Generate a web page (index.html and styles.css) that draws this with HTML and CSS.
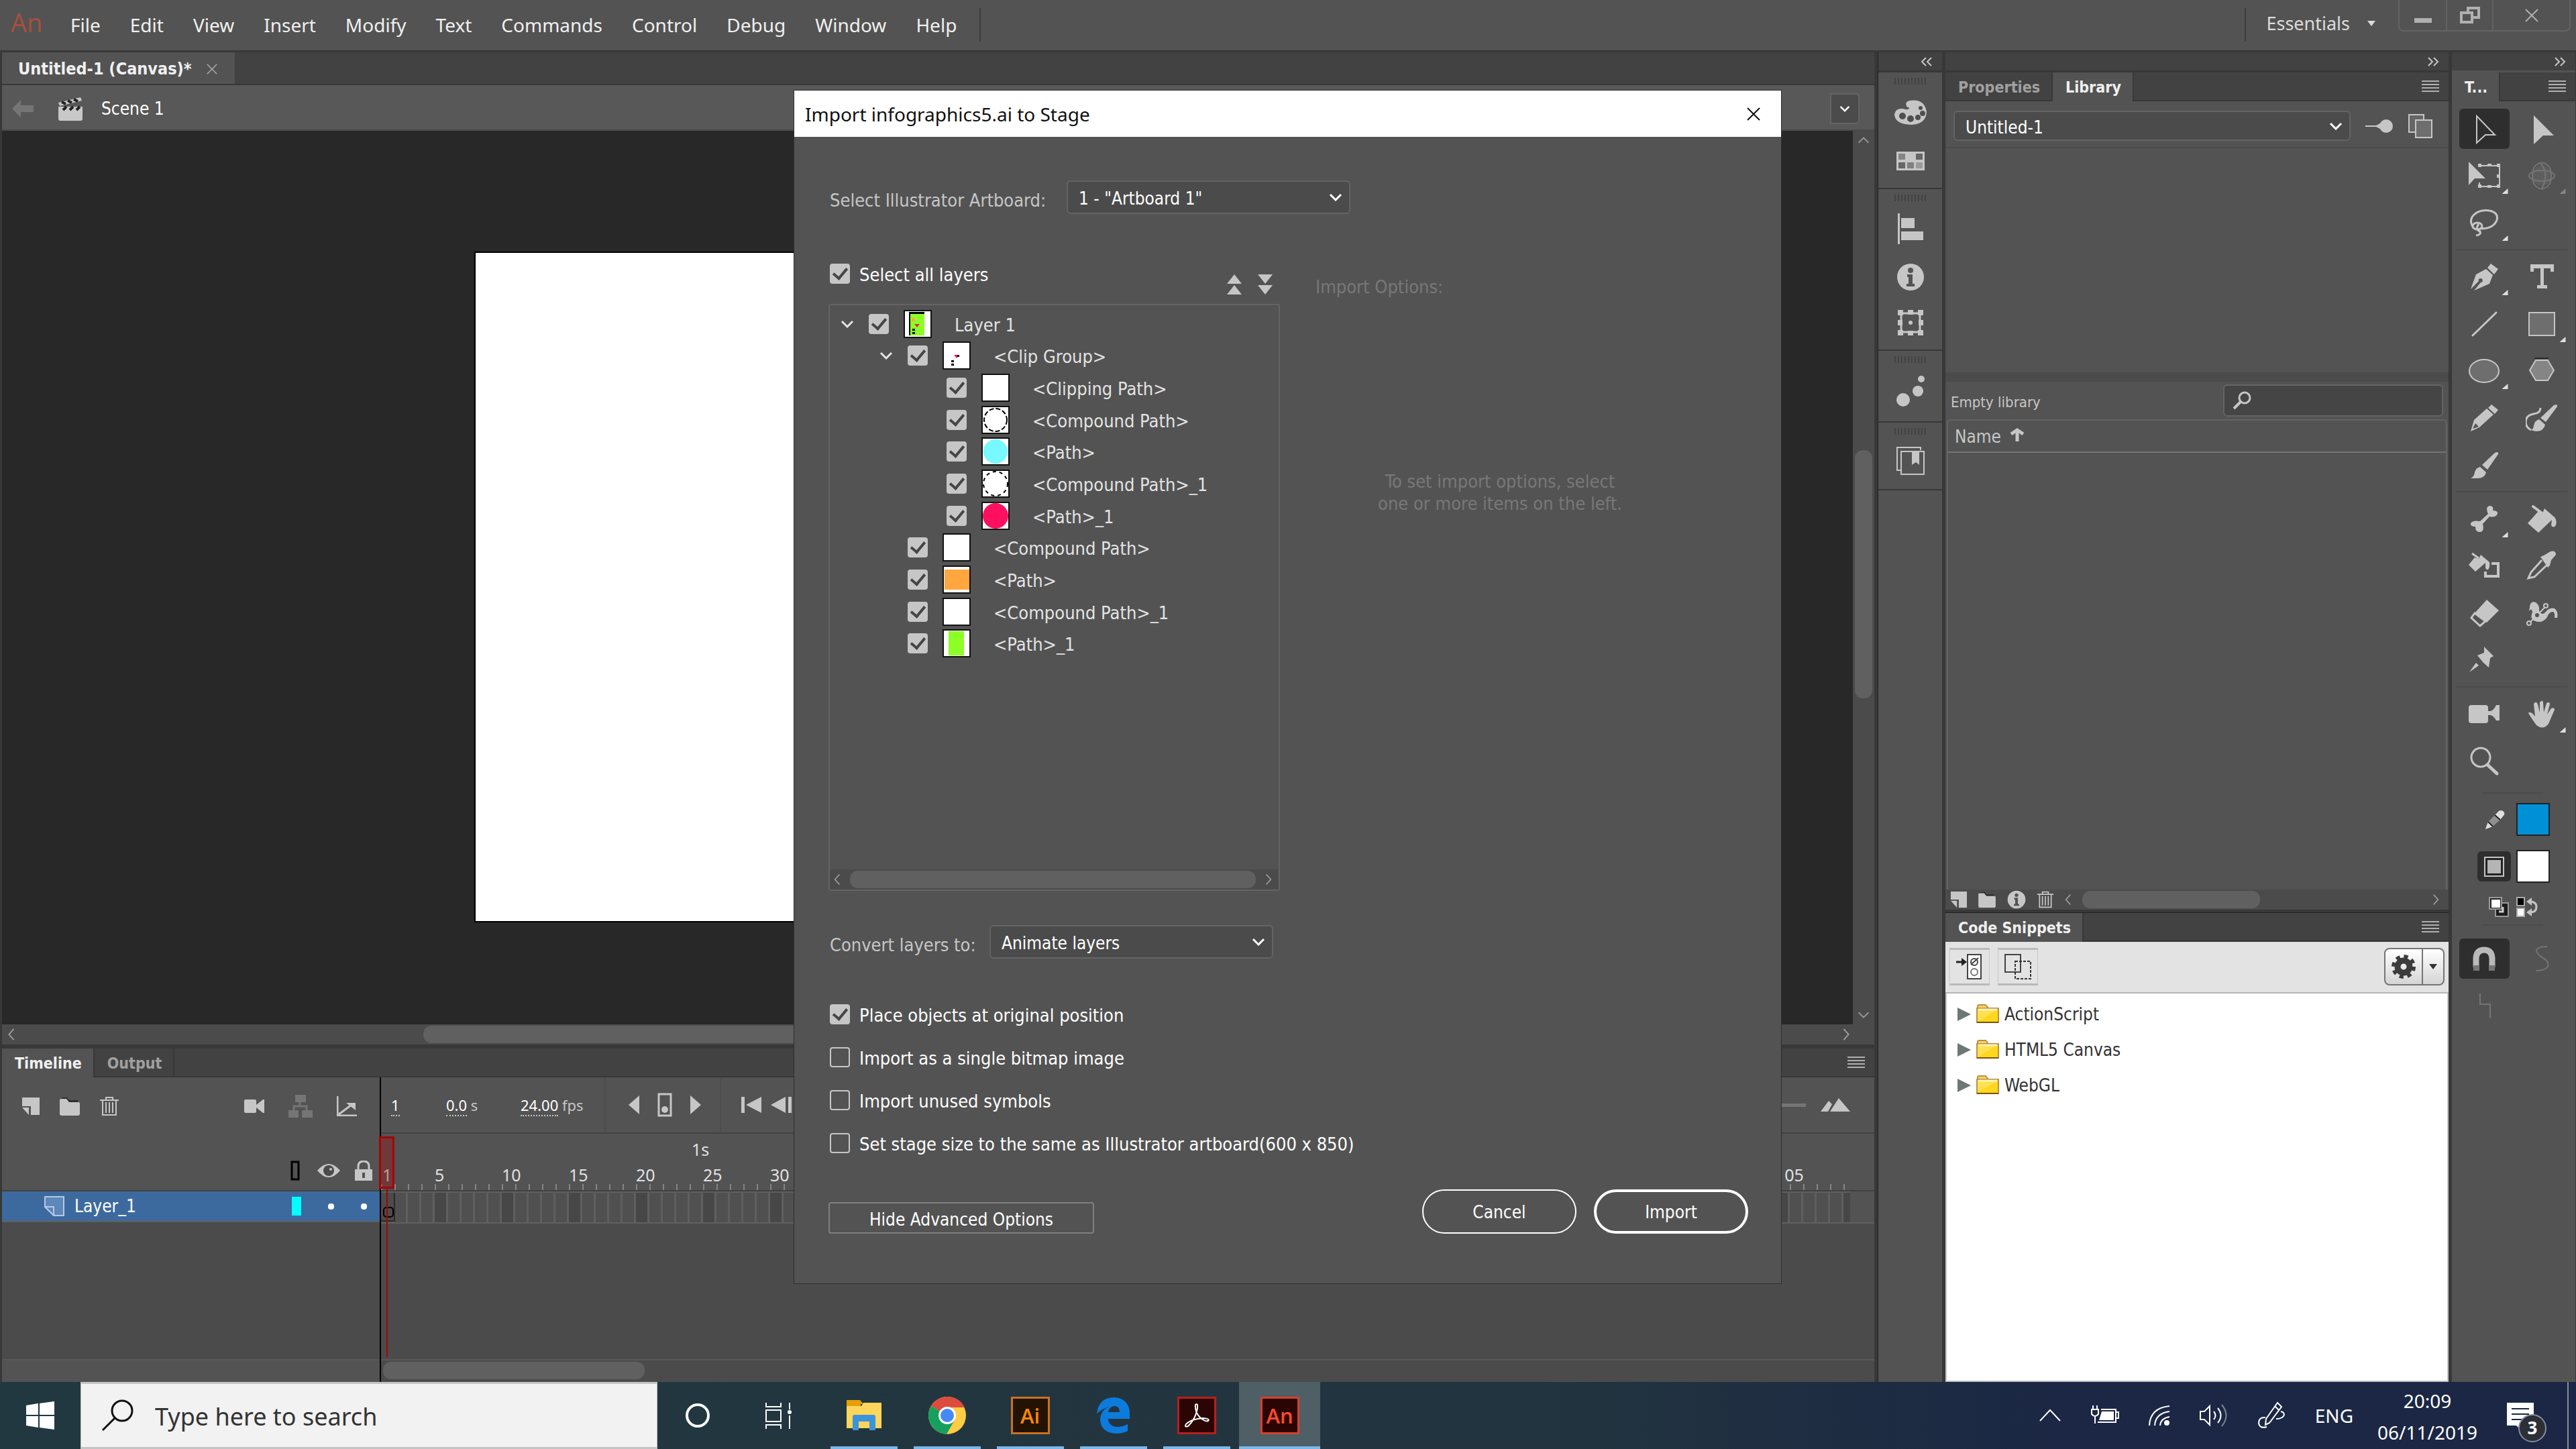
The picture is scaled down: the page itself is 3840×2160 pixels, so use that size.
FILE: index.html
```
<!DOCTYPE html>
<html lang="en">
<head>
    <meta charset="UTF-8">
    <meta name="viewport" content="width=device-width, initial-scale=1.0">
    <title>Untitled-1 (Canvas)* - Animate</title>
    <link rel="stylesheet" href="styles.css">
</head>
<body>
    <!-- shared icons -->
    <svg class="defs" width="0" height="0" aria-hidden="true">
        <symbol id="chevron" viewBox="0 0 20 12"><path d="M2 2l8 8 8-8" fill="none" stroke="currentColor" stroke-width="3"/></symbol>
        <symbol id="left" viewBox="0 0 12 20"><path d="M10 1L2 10l8 9" fill="none" stroke="currentColor" stroke-width="2"/></symbol>
        <symbol id="right" viewBox="0 0 12 20"><path d="M2 1l8 9-8 9" fill="none" stroke="currentColor" stroke-width="2"/></symbol>
        <symbol id="dbl-left" viewBox="0 0 18 14"><path d="M8 1L2 7l6 6M16 1l-6 6 6 6" fill="none" stroke="currentColor" stroke-width="2"/></symbol>
        <symbol id="dbl-right" viewBox="0 0 18 14"><path d="M2 1l6 6-6 6M10 1l6 6-6 6" fill="none" stroke="currentColor" stroke-width="2"/></symbol>
        <symbol id="lines" viewBox="0 0 26 18"><path d="M0 1h26M0 6h26M0 11h26M0 16h26" stroke="currentColor" stroke-width="2"/></symbol>
        <symbol id="close" viewBox="0 0 20 20"><path d="M1 1l18 18M19 1L1 19" stroke="currentColor" stroke-width="2"/></symbol>
        <symbol id="new" viewBox="0 0 26 26"><path d="M0 0h26v26H13V13H0zM0 15h10v11z" fill="currentColor"/></symbol>
        <symbol id="folder" viewBox="0 0 30 28"><path d="M2 4l2-3h7l3 4h13v3H2z" fill="#2e2e2e"/><path d="M0 5q0-2 2-2h8l4 5h14q2 0 2 2v15q0 3-3 3H3q-3 0-3-3z" fill="currentColor"/></symbol>
        <symbol id="trash" viewBox="0 0 28 30"><path d="M0 6h28M9 6V2h10v4M4 7v21h20V7M9 9v16M14 9v16M19 9v16" fill="none" stroke="currentColor" stroke-width="2"/></symbol>
        <symbol id="info" viewBox="0 0 42 42"><circle cx="21" cy="21" r="20" fill="currentColor"/><circle cx="21" cy="11" r="4" fill="#535353"/><path d="M16 17h8v14h3v4H15v-4h3v-10h-2z" fill="#535353"/></symbol>
        <symbol id="snippet-folder" viewBox="0 0 34 30"><path d="M2 3q0-2 2-2h10l4 5H2z" fill="#ffd45c" stroke="#b8924a" stroke-width="2"/><path d="M1 6h32v21H1z" fill="#ffe14f" stroke="#b8924a" stroke-width="2"/><path d="M2 26L32 8v18z" fill="#ffd71c"/><path d="M3 8h28" stroke="#fff3b8" stroke-width="3"/><path d="M1 27h32" stroke="#7b5208" stroke-width="2"/></symbol>
    </svg>

    <header class="menubar">
        <span class="app-logo">An</span>
        <nav class="menu">
            <a href="#">File</a><a href="#">Edit</a><a href="#">View</a><a href="#">Insert</a><a href="#">Modify</a><a href="#">Text</a><a href="#">Commands</a><a href="#">Control</a><a href="#">Debug</a><a href="#">Window</a><a href="#">Help</a>
        </nav>
        <button class="workspace-switch" type="button">Essentials
            <svg width="12" height="8" viewBox="0 0 12 8"><path d="M0 0h12L6 8z" fill="currentColor"/></svg>
        </button>
        <div class="window-controls">
            <button type="button" aria-label="Minimize"><svg width="26" height="26" viewBox="0 0 26 26"><path d="M0 17h26v7H0z" fill="currentColor"/></svg></button>
            <button type="button" aria-label="Restore"><svg width="30" height="26" viewBox="0 0 30 26"><path d="M12 8V2h16v14h-8M2 9h16v14H2z" fill="none" stroke="currentColor" stroke-width="4"/></svg></button>
            <button type="button" aria-label="Close"><svg width="24" height="20"><use href="#close"/></svg></button>
        </div>
    </header>

    <main class="workspace">
        <div class="editor">
            <div class="doc-tabs">
                <span class="doc-tab">Untitled-1 (Canvas)* <button type="button" class="plain" aria-label="Close tab"><svg width="16" height="16"><use href="#close"/></svg></button></span>
            </div>
            <div class="scene-bar">
                <svg class="dim" width="32" height="26" viewBox="0 0 32 26"><path d="M0 13L13 0v8h19v10H13v8z" fill="currentColor"/></svg>
                <svg width="38" height="36" viewBox="0 0 38 36"><path d="M1 15h36v18q0 3-3 3H4q-3 0-3-3z" fill="#c8c8c8"/><path d="M1 9L34 1l2 5L3 14z" fill="#c8c8c8"/><path d="M6 8l6 3M15 6l6 3M24 4l6 3M8 20l5-5M18 20l5-5M28 20l5-5" stroke="#222" stroke-width="4"/></svg>
                <span>Scene 1</span>
                <div class="zoom-box"><svg width="16" height="10"><use href="#chevron"/></svg></div>
            </div>
            <div class="stage-wrap">
                <div class="canvas"><div class="stage"></div></div>
                <div class="vscroll">
                    <svg width="18" height="12" viewBox="0 0 20 12"><path d="M2 10l8-8 8 8" fill="none" stroke="currentColor" stroke-width="2"/></svg>
                    <i></i>
                    <svg width="18" height="12" viewBox="0 0 20 12"><path d="M2 2l8 8 8-8" fill="none" stroke="currentColor" stroke-width="2"/></svg>
                </div>
            </div>
            <div class="hscroll canvas-scroll">
                <svg width="12" height="18"><use href="#left"/></svg><i></i><svg width="12" height="18"><use href="#right"/></svg>
            </div>

            <section class="timeline">
                <div class="tabs">
                    <button type="button" class="tab active">Timeline</button><button type="button" class="tab">Output</button>
                    <svg class="menu-icon" width="26" height="18"><use href="#lines"/></svg>
                </div>
                <div class="tl-grid">
                    <div class="tl-layers">
                        <div class="tl-tools">
                            <svg width="26" height="26"><use href="#new"/></svg>
                            <svg width="30" height="28"><use href="#folder"/></svg>
                            <svg width="28" height="30"><use href="#trash"/></svg>
                            <svg class="push" width="30" height="22" viewBox="0 0 30 22"><path d="M2 1h14q2 0 2 2v16q0 2-2 2H2q-2 0-2-2V3q0-2 2-2zM18 9L28 1h2v20h-2l-10-8z" fill="currentColor"/></svg>
                            <svg class="dim" width="36" height="34" viewBox="0 0 36 34"><path d="M10 0h16v11H10zM0 23h15v11H0zM20 23h16v11H20z" fill="currentColor"/><path d="M17 11v6M8 23v-6h19v6" fill="none" stroke="currentColor" stroke-width="3"/></svg>
                            <svg width="30" height="30" viewBox="0 0 30 30"><path d="M1 0v29h29M3 27l19-14" fill="none" stroke="currentColor" stroke-width="3"/><path d="M14 10h14v11z" fill="currentColor"/></svg>
                        </div>
                        <div class="tl-heads">
                            <svg width="14" height="30" viewBox="0 0 14 30"><path d="M2 2h10v26H2z" fill="none" stroke="#000" stroke-width="3"/></svg>
                            <svg width="34" height="22" viewBox="0 0 34 22"><path d="M0 11Q17-9 34 11Q17 31 0 11z" fill="currentColor"/><ellipse cx="17" cy="11" rx="8" ry="8" fill="#4b4b4b"/><circle cx="20" cy="9" r="2" fill="currentColor"/></svg>
                            <svg width="26" height="30" viewBox="0 0 26 30"><path d="M0 13h26v17H0z" fill="currentColor"/><path d="M5 14V9q0-8 8-8t8 8v5" fill="none" stroke="currentColor" stroke-width="3"/><path d="M13 18v8" stroke="#535353" stroke-width="4"/></svg>
                        </div>
                        <div class="tl-layer">
                            <svg width="30" height="30" viewBox="0 0 30 30"><path d="M1 1h28v28H14L1 16z" fill="#5e87bb" stroke="#b3cbe8" stroke-width="2"/><path d="M1 16h13v13" fill="none" stroke="#b3cbe8" stroke-width="2"/></svg>
                            <span>Layer_1</span>
                            <i class="outline-color"></i><i class="dot"></i><i class="dot"></i>
                        </div>
                        <div class="tl-rest"></div>
                        <div class="tl-foot"></div>
                    </div>
                    <div class="tl-frames">
                        <div class="tl-playback">
                            <span class="num n1"><u>1</u></span>
                            <span class="num n2"><u>0.0</u> s</span>
                            <span class="num n3"><u>24.00</u> fps</span>
                            <div class="group g1">
                                <svg width="16" height="28" viewBox="0 0 16 28"><path d="M16 0v28L0 14z" fill="currentColor"/></svg>
                                <svg width="22" height="36" viewBox="0 0 22 36"><path d="M2 2h18v32H2z" fill="none" stroke="currentColor" stroke-width="3"/><circle cx="11" cy="25" r="5" fill="currentColor"/></svg>
                                <svg width="16" height="28" viewBox="0 0 16 28"><path d="M0 0v28l16-14z" fill="currentColor"/></svg>
                            </div>
                            <div class="group g2">
                                <svg width="30" height="24" viewBox="0 0 30 24"><path d="M0 0h5v24H0zM30 0v24L7 12z" fill="currentColor"/></svg>
                                <svg width="32" height="24" viewBox="0 0 32 24"><path d="M22 0v24L0 12zM26 0h5v24h-5z" fill="currentColor"/></svg>
                            </div>
                            <div class="tl-zoom"><i></i><svg width="44" height="20" viewBox="0 0 44 20"><path d="M0 20L12 4l5 5-6 11zM14 20L27 0l17 20z" fill="currentColor"/></svg></div>
                        </div>
                        <div class="tl-ruler">
                            <div class="second">1s</div>
                            <div class="numbers"><span class="first">1</span><span>5</span><span>10</span><span>15</span><span>20</span><span>25</span><span>30</span><span class="last">105</span></div>
                            <div class="ticks"></div>
                        </div>
                        <div class="tl-strip"><div class="key"></div></div>
                        <div class="tl-rest"></div>
                        <div class="tl-foot"><i></i></div>
                        <div class="playhead"></div>
                    </div>
                </div>
            </section>
        </div>

        <div class="dock">
            <div class="dock-head"><svg width="18" height="14"><use href="#dbl-left"/></svg></div>
            <div class="dock-group colors">
                <i class="grip"></i>
                <svg width="50" height="38" viewBox="0 0 50 38"><path d="M20 11Q15 3 24 1Q46-2 49 18Q48 36 26 37Q2 36 1 22Q2 12 14 13Q22 16 23 12Q22 10 20 11z" fill="currentColor"/><g fill="#4f4f4f"><ellipse cx="13" cy="24" rx="5" ry="5"/><circle cx="25" cy="28" r="5"/><circle cx="36" cy="26" r="4"/><circle cx="43" cy="20" r="4"/><circle cx="40" cy="12" r="3"/></g></svg>
                <svg width="42" height="28" viewBox="0 0 42 28"><path d="M0 0h42v28H0z" fill="currentColor"/><path d="M3 3h10v9H3z" fill="#858585"/><path d="M29 3h10v9H29zM3 16h10v9H3z" fill="#666"/><path d="M16 16h10v9H16z" fill="#808080"/><path d="M29 16h10v9H29z" fill="#9b9b9b"/></svg>
            </div>
            <div class="dock-group">
                <i class="grip"></i>
                <svg width="38" height="46" viewBox="0 0 38 46"><path d="M0 0h3v46H0zM5 7h20v15H5zM5 27h33v13H5z" fill="currentColor"/></svg>
                <svg width="42" height="42"><use href="#info"/></svg>
                <svg width="38" height="38" viewBox="0 0 38 38"><path d="M5 5h28v28H5z" fill="none" stroke="currentColor" stroke-width="3"/><path d="M0 0h8v8H0zM15 0h8v7h-8zM30 0h8v8h-8zM0 15h7v8H0zM31 15h7v8h-7zM0 30h8v8H0zM15 31h8v7h-8zM30 30h8v8h-8z" fill="currentColor"/><circle cx="19" cy="19" r="3" fill="currentColor"/></svg>
            </div>
            <div class="dock-group">
                <i class="grip"></i>
                <svg width="44" height="48" viewBox="0 0 44 48"><g fill="currentColor"><circle cx="11" cy="37" r="10"/><circle cx="33" cy="24" r="8"/><circle cx="38" cy="6" r="5"/></g></svg>
            </div>
            <div class="dock-group">
                <i class="grip"></i>
                <svg width="42" height="42" viewBox="0 0 42 42"><path d="M36 5V1H1v34h5M7 7h34v34H7z" fill="none" stroke="currentColor" stroke-width="2"/><path d="M23 7h11v20l-5-4-6 4z" fill="currentColor"/></svg>
            </div>
            <div class="dock-rest"></div>
        </div>

        <div class="panels">
            <div class="dock-head"><svg width="18" height="14"><use href="#dbl-right"/></svg></div>
            <section class="library">
                <div class="tabs">
                    <button type="button" class="tab">Properties</button><button type="button" class="tab active">Library</button>
                    <svg class="menu-icon" width="26" height="18"><use href="#lines"/></svg>
                </div>
                <div class="lib-source">
                    <div class="select">
                        <select aria-label="Document"><option>Untitled-1</option></select>
                        <svg width="20" height="12"><use href="#chevron"/></svg>
                    </div>
                    <svg width="42" height="22" viewBox="0 0 42 22"><path d="M0 10h16l8-4v10l-8-4H0z" fill="currentColor"/><circle cx="31" cy="11" r="10" fill="currentColor"/></svg>
                    <svg width="36" height="36" viewBox="0 0 36 36"><path d="M1 1h22v26H1z" fill="#666" stroke="currentColor" stroke-width="2"/><path d="M11 9h24v26H11z" fill="#6e6e6e" stroke="currentColor" stroke-width="2"/></svg>
                </div>
                <div class="lib-preview"></div>
                <div class="lib-search">
                    <label for="lib-q">Empty library</label>
                    <div class="search-field">
                        <svg width="28" height="28" viewBox="0 0 28 28"><circle cx="18" cy="10" r="8" fill="none" stroke="currentColor" stroke-width="3"/><path d="M12 16L2 26" stroke="currentColor" stroke-width="4"/></svg>
                        <input type="text" id="lib-q">
                    </div>
                </div>
                <div class="lib-list">
                    <div class="lib-name">Name <svg width="20" height="20" viewBox="0 0 20 20"><path d="M10 20V4M1 9l9-6 9 6" fill="none" stroke="currentColor" stroke-width="5"/></svg></div>
                </div>
                <div class="lib-foot hscroll">
                    <svg width="24" height="24"><use href="#new"/></svg>
                    <svg width="28" height="24"><use href="#folder"/></svg>
                    <svg width="28" height="28"><use href="#info"/></svg>
                    <svg width="26" height="26"><use href="#trash"/></svg>
                    <svg width="10" height="18"><use href="#left"/></svg><i></i><svg class="push" width="10" height="18"><use href="#right"/></svg>
                </div>
            </section>
            <section class="snippets">
                <div class="tabs">
                    <button type="button" class="tab active">Code Snippets</button>
                    <svg class="menu-icon" width="26" height="18"><use href="#lines"/></svg>
                </div>
                <div class="snip-bar">
                    <button type="button" aria-label="Add to current frame"><svg width="40" height="38" viewBox="0 0 40 38"><path d="M17 1h20v36H17z" fill="#fff" stroke="#444" stroke-width="2"/><path d="M0 12h10" stroke="#222" stroke-width="3"/><path d="M8 6l8 6-8 6z" fill="#222"/><ellipse cx="27" cy="12" rx="5" ry="5" fill="none" stroke="#444" stroke-width="2"/><ellipse cx="27" cy="27" rx="5" ry="5" fill="none" stroke="#777" stroke-width="2"/><path d="M22 16L33 6" stroke="#444" stroke-width="2"/></svg></button>
                    <button type="button" aria-label="Copy to clipboard"><svg width="40" height="38" viewBox="0 0 40 38"><path d="M1 1h23v26H1z" fill="none" stroke="#444" stroke-width="2"/><path d="M16 11h23v26H16z" fill="none" stroke="#333" stroke-width="2" stroke-dasharray="4 2"/></svg></button>
                    <button type="button" class="gear" aria-label="Options">
                        <svg width="38" height="38" viewBox="0 0 38 38"><circle cx="19" cy="19" r="9" fill="none" stroke="#3c3c3c" stroke-width="9"/><circle cx="19" cy="19" r="15" fill="none" stroke="#3c3c3c" stroke-width="6" stroke-dasharray="6 5.78"/></svg>
                        <span><svg width="14" height="8" viewBox="0 0 12 8"><path d="M0 0h12L6 8z" fill="#333"/></svg></span>
                    </button>
                </div>
                <ul class="snip-list">
                    <li><svg width="20" height="20" viewBox="0 0 20 20"><path d="M0 0v20l20-10z" fill="#6d7876"/></svg><svg width="34" height="30"><use href="#snippet-folder"/></svg>ActionScript</li>
                    <li><svg width="20" height="20" viewBox="0 0 20 20"><path d="M0 0v20l20-10z" fill="#6d7876"/></svg><svg width="34" height="30"><use href="#snippet-folder"/></svg>HTML5 Canvas</li>
                    <li><svg width="20" height="20" viewBox="0 0 20 20"><path d="M0 0v20l20-10z" fill="#6d7876"/></svg><svg width="34" height="30"><use href="#snippet-folder"/></svg>WebGL</li>
                </ul>
            </section>
        </div>

        <aside class="tools">
            <div class="dock-head"><svg width="18" height="14"><use href="#dbl-right"/></svg></div>
            <div class="tabs">
                <button type="button" class="tab active">T...</button>
                <svg class="menu-icon" width="26" height="18"><use href="#lines"/></svg>
            </div>
            <div class="tool-grid">
                <button type="button" class="tool on" aria-label="Selection"><svg viewBox="0 0 48 48"><path d="M13 5v40l13-12h14z" fill="none" stroke="currentColor" stroke-width="2"/></svg></button>
                <button type="button" class="tool" aria-label="Subselection"><svg viewBox="0 0 48 48"><path d="M12 4v43l14-13h16z" fill="currentColor"/></svg></button>
                <button type="button" class="tool more" aria-label="Free transform"><svg viewBox="0 0 48 48"><path d="M17 34v6h30V9H17" fill="none" stroke="currentColor" stroke-width="2"/><path d="M1 3v35l9-10h16z" fill="currentColor"/><path d="M15 6h5v5h-5zM29 6h6v4h-6zM43 6h5v5h-5zM43 22h5v5h-5zM43 37h5v5h-5zM29 38h6v4h-6zM15 37h5v5h-5z" fill="currentColor"/></svg></button>
                <button type="button" class="tool more dim" aria-label="3D rotation"><svg viewBox="0 0 48 48"><circle cx="24" cy="24" r="15" fill="#5e5e5e"/><g fill="none" stroke="currentColor" stroke-width="2"><path d="M12 12Q24-3 36 12M12 36Q24 51 36 36M12 12Q8 24 12 36M36 12Q40 24 36 36"/><ellipse cx="24" cy="24" rx="19" ry="8"/><path d="M22 5Q36 22 24 43"/></g></svg></button>
                <button type="button" class="tool more" aria-label="Lasso"><svg viewBox="0 0 48 48"><g fill="none" stroke="currentColor" stroke-width="3"><path d="M7 30Q1 20 9 12Q18 4 32 6Q46 9 43 20Q38 33 19 33"/><ellipse cx="14" cy="29" rx="7" ry="5"/><path d="M16 26Q10 34 18 37Q20 42 12 43"/></g></svg></button>
            </div>
            <hr>
            <div class="tool-grid">
                <button type="button" class="tool more" aria-label="Pen"><svg viewBox="0 0 48 48"><path d="M29 10l5-6 11 8-6 8zM27 12l10 9-5 13L9 44l10-12a3 3 0 1 0-3-2L4 42l8-22z" fill="currentColor"/></svg></button>
                <button type="button" class="tool" aria-label="Text"><svg viewBox="0 0 48 48"><path d="M7 5h35v11h-5v-5H27v25h5v5H17v-5h5V11H12v5H7z" fill="currentColor"/></svg></button>
                <button type="button" class="tool" aria-label="Line"><svg viewBox="0 0 48 48"><path d="M7 41L42 7" stroke="currentColor" stroke-width="3" stroke-linecap="round"/></svg></button>
                <button type="button" class="tool more" aria-label="Rectangle"><svg viewBox="0 0 48 48"><path d="M5 7h38v34H5z" fill="#6e6e6e" stroke="currentColor" stroke-width="2"/></svg></button>
                <button type="button" class="tool more" aria-label="Oval"><svg viewBox="0 0 48 48"><ellipse cx="24" cy="24" rx="22" ry="17" fill="#6e6e6e" stroke="currentColor" stroke-width="2"/></svg></button>
                <button type="button" class="tool" aria-label="PolyStar"><svg viewBox="0 0 48 48"><path d="M13 5h21" stroke="#2b2b2b" stroke-width="2"/><path d="M15 8h18l9 15-9 15H15L6 23z" fill="#858585" stroke="currentColor" stroke-width="2"/></svg></button>
                <button type="button" class="tool" aria-label="Pencil"><svg viewBox="0 0 48 48"><path d="M30 9l5-5 10 8-5 6zM28 10l10 9-21 19L4 44l5-17zM11 32l-4 8 9-3z" fill="currentColor" fill-rule="evenodd"/></svg></button>
                <button type="button" class="tool" aria-label="Paint brush"><svg viewBox="0 0 48 48"><path d="M22 24L42 5q6-2 5 2L30 30zM20 26l9 8q-2 10-14 10l-8-2q4 0 5-6 1-8 8-10z" fill="currentColor"/><path d="M22 9q0 8-10 9-12 2-12 12 0 8 8 12" fill="none" stroke="currentColor" stroke-width="3"/></svg></button>
                <button type="button" class="tool" aria-label="Brush"><svg viewBox="0 0 48 48"><path d="M21 24L40 6q6-3 5 2L29 31zM18 27l9 8q-2 9-13 9H4q5-2 6-9 2-7 8-8z" fill="currentColor"/></svg></button>
            </div>
            <hr>
            <div class="tool-grid">
                <button type="button" class="tool more" aria-label="Bone"><svg viewBox="0 0 48 48"><path d="M18 27L30 16Q25 5 33 4q6 1 4 7 8 0 7 5-3 6-12 4L22 31q3 12-5 12-6 0-6-8-8 0-7-5 3-5 14-3z" fill="currentColor"/></svg></button>
                <button type="button" class="tool" aria-label="Paint bucket"><svg viewBox="0 0 48 48"><path d="M3 30l16-18 5 5 4-9 15 13q4 4 2 12-4 5-7 0l1-8L19 44z" fill="currentColor"/><path d="M11 5l16 12" stroke="currentColor" stroke-width="4" stroke-linecap="round"/></svg></button>
                <button type="button" class="tool" aria-label="Ink bottle"><svg viewBox="0 0 48 48"><path d="M1 22L10 11l6 2 3-6 13 11q1 8-2 11-3 1-4-3v-7L11 32z" fill="currentColor"/><path d="M6 5l10 7" stroke="currentColor" stroke-width="3"/><path d="M35 20h10v19H26v-7" fill="none" stroke="currentColor" stroke-width="4"/></svg></button>
                <button type="button" class="tool" aria-label="Eyedropper"><svg viewBox="0 0 48 48"><path d="M22 10l5-2 10-6q8-2 8 5l-7 8-2 8-3 3z" fill="currentColor"/><path d="M24 15L8 33l-4 9 9-2 19-18" fill="none" stroke="currentColor" stroke-width="3"/></svg></button>
                <button type="button" class="tool" aria-label="Eraser"><svg viewBox="0 0 48 48"><path d="M28 4l18 16-18 18-18-14z" fill="currentColor"/><path d="M10 24l-5 7 13 12 8-7z" fill="none" stroke="currentColor" stroke-width="3"/></svg></button>
                <button type="button" class="tool" aria-label="Width"><svg viewBox="0 0 48 48"><path d="M6 15Q7 5 15 8q6 4 5 12 3 8 9 3 6-8 14-6 6 5 4 14h-4q1-9-3-9-5 0-8 8-8 11-20 5-6-4-2-12-1-8-5-2z" fill="currentColor"/><path d="M5 39L30 14" stroke="currentColor" stroke-width="2"/><g fill="#535353" stroke="currentColor" stroke-width="2"><circle cx="5" cy="39" r="3"/><circle cx="17" cy="27" r="4"/><circle cx="30" cy="13" r="3"/></g></svg></button>
                <button type="button" class="tool" aria-label="Asset warp"><svg viewBox="0 0 48 48"><path d="M24 4l14 14-5 3-2 14-8-7-9-11 10-4zM12 28l4 4L2 42z" fill="currentColor"/></svg></button>
            </div>
            <hr>
            <div class="tool-grid">
                <button type="button" class="tool" aria-label="Camera"><svg viewBox="0 0 48 48"><rect x="1" y="10" width="29" height="27" rx="4" fill="currentColor"/><path d="M30 19h4q5-2 8-9h5v23h-5q-3-6-8-8h-4z" fill="currentColor"/></svg></button>
                <button type="button" class="tool more" aria-label="Hand"><svg viewBox="0 0 48 48"><path d="M16 40Q8 29 4 22q3-4 10 5L12 8q4-5 6 1l3 12 0-15q4-5 5 0l1 15 4-14q5-3 5 2l-4 15 6-9q5-2 5 2L34 38q-8 10-18 2z" fill="currentColor"/></svg></button>
                <button type="button" class="tool" aria-label="Zoom"><svg viewBox="0 0 48 48"><circle cx="19" cy="18" r="14" fill="none" stroke="currentColor" stroke-width="3"/><path d="M29 29l14 13" stroke="currentColor" stroke-width="5" stroke-linecap="round"/></svg></button>
            </div>
            <hr class="short">
            <div class="swatches">
                <svg class="swatch-icon" width="30" height="30" viewBox="0 0 30 30"><path d="M1 29l4-11L15 8l8 7-11 10z" fill="#8f8f8f"/><path d="M1 29l4-11 7 7zM15 8l6-6q5-3 8 2 1 4-2 6l-4 5z" fill="#e0e0e0"/><path d="M5 18l7 7M15 8l8 7" stroke="#222" stroke-width="2"/></svg>
                <button type="button" class="swatch blue" aria-label="Stroke color"></button>
                <button type="button" class="fill-mode" aria-label="Fill"><svg width="30" height="30" viewBox="0 0 30 30"><path d="M1 1h28v28H1z" fill="#222" stroke="#c4c4c4" stroke-width="2"/><path d="M5 5h20v20H5z" fill="#b5b5b5"/></svg></button>
                <button type="button" class="swatch white" aria-label="Fill color"></button>
                <svg class="end" width="30" height="30" viewBox="0 0 30 30"><path d="M10 9h19v20H10z" fill="#1c1c1c" stroke="#999" stroke-width="2"/><path d="M1 1h18v17H1z" fill="#222" stroke="#999" stroke-width="2"/><path d="M4 4h13v12H4z" fill="#fff"/><path d="M21 15v7h-6" fill="none" stroke="#ccc" stroke-width="3"/></svg>
                <svg width="32" height="30" viewBox="0 0 32 30"><path d="M1 1h11v12H1z" fill="#000" stroke="#aaa" stroke-width="2"/><path d="M1 17h11v12H1z" fill="#fff" stroke="#aaa" stroke-width="2"/><path d="M20 7q10 0 10 8t-10 8" fill="none" stroke="#c4c4c4" stroke-width="3"/><path d="M23 1v12l-8-6zM23 17v12l-8-6z" fill="#c4c4c4"/></svg>
            </div>
            <hr class="short">
            <div class="tool-grid">
                <button type="button" class="tool on" aria-label="Snap to objects"><svg viewBox="0 0 48 48"><path d="M12 37V23Q13 11 24 11t12 12v14" fill="none" stroke="#b9b9b9" stroke-width="9"/><path d="M8 34h9v8H8zM31 34h9v8h-9z" fill="#777"/></svg></button>
                <button type="button" class="tool dim" aria-label="Smooth"><svg viewBox="0 0 48 48"><path d="M32 6Q16 6 16 13q2 6 13 12 8 7 2 13-5 4-16 4" fill="none" stroke="currentColor" stroke-width="2"/></svg></button>
                <button type="button" class="tool dim" aria-label="Straighten"><svg viewBox="0 0 48 48"><path d="M18 6v16h15v21" fill="none" stroke="currentColor" stroke-width="2"/></svg></button>
            </div>
        </aside>
    </main>

    <footer class="taskbar">
        <button type="button" class="start" aria-label="Start"><svg width="42" height="42" viewBox="0 0 42 42"><path d="M0 6l18-3v17H0zM20 3l22-3v20H20zM0 22h18v17L0 36zM20 22h22v20l-22-3z" fill="#fff"/></svg></button>
        <label class="task-search">
            <svg width="48" height="48" viewBox="0 0 48 48"><circle cx="31" cy="17" r="15" fill="none" stroke="#111" stroke-width="3"/><path d="M20 28L2 46" stroke="#111" stroke-width="3"/></svg>
            <input type="text" placeholder="Type here to search">
        </label>
        <div class="task-icons">
            <button type="button" aria-label="Cortana"><svg width="40" height="40" viewBox="0 0 40 40"><circle cx="20" cy="20" r="16" fill="none" stroke="#fff" stroke-width="4"/></svg></button>
            <button type="button" aria-label="Task view"><svg width="40" height="40" viewBox="0 0 40 40"><path d="M2 1v6h22V1M2 12h22v17H2zM2 40v-6h22v6M37 1v10M37 20v20" fill="none" stroke="#fff" stroke-width="2"/><circle cx="37" cy="15" r="3" fill="#fff"/></svg></button>
        </div>
        <div class="task-apps">
            <button type="button" aria-label="File Explorer"><svg width="54" height="46" viewBox="0 0 54 46"><path d="M1 0h20l5 6h-4v6H1z" fill="#e3a008"/><path d="M1 9h22l3-5h27v38H1z" fill="#ffd65c"/><path d="M10 45V25q0-3 3-3h28q3 0 3 3v20h-9V32H19v13z" fill="#3c94dd"/></svg></button>
            <button type="button" aria-label="Chrome"><svg width="56" height="56" viewBox="0 0 56 56"><circle cx="28" cy="28" r="28" fill="#fc4"/><path d="M28 28L4 14Q13 0 28 0q18 0 26 16H28z" fill="#db4c3f"/><path d="M28 28L4 14q-8 15 0 28 8 13 23 14l12-21z" fill="#16a05d"/><circle cx="28" cy="28" r="13" fill="#fff"/><circle cx="28" cy="28" r="10" fill="#4688f4"/></svg></button>
            <button type="button" class="adobe ai"><span>Ai</span></button>
            <button type="button" aria-label="Edge"><svg width="50" height="54" viewBox="0 0 50 54"><path d="M0 24Q3 0 26 0q23 2 23 25v7H17q1 12 14 12 8 0 15-4v10q-7 4-18 4Q5 52 5 32q1-13 13-18-8 2-18 10zM17 22h17q0-9-8-9-8 1-9 9z" fill="#0c7bdc" fill-rule="evenodd"/></svg></button>
            <button type="button" class="adobe acrobat" aria-label="Acrobat"><span><svg width="38" height="38" viewBox="0 0 38 38"><path d="M17 3q4-3 3 5Q17 25 6 35q-6 2-3-3 8-8 26-9 10 1 7 4-4 2-12-5Q16 14 17 3z" fill="none" stroke="#fff" stroke-width="2"/></svg></span></button>
            <button type="button" class="adobe an current"><span>An</span></button>
        </div>
        <div class="tray">
            <svg width="34" height="20" viewBox="0 0 34 20"><path d="M2 18L17 2l15 16" fill="none" stroke="#fff" stroke-width="2"/></svg>
            <svg width="42" height="30" viewBox="0 0 42 30"><path d="M15 6h22v19H10M38 10h3v9h-3" fill="none" stroke="#fff" stroke-width="2"/><path d="M16 9h18v13H12z" fill="#fff"/><path d="M3 0v6M9 0v6M1 6h10v7q-5 6-10 0zM6 16v11" fill="none" stroke="#fff" stroke-width="2"/></svg>
            <svg width="32" height="32" viewBox="0 0 32 32"><path d="M1 31Q2 5 31 2M9 31Q10 13 31 10M17 31Q18 20 31 18" fill="none" stroke="#fff" stroke-width="2"/><circle cx="27" cy="27" r="4" fill="#fff"/></svg>
            <svg width="42" height="36" viewBox="0 0 42 36"><path d="M1 12h6l8-8v28l-8-8H1zM21 12q5 6 0 12M27 7q9 11 0 22" fill="none" stroke="#fff" stroke-width="2"/><path d="M33 2q13 16 0 32" fill="none" stroke="#7b8496" stroke-width="2"/></svg>
            <svg width="42" height="42" viewBox="0 0 42 42"><path d="M30 2l6 6-18 24-6 3 1-9zM26 7l6 6M12 24Q2 23 2 33q2 8 12 5M35 15q7 2 4 7-3 4-11 4" fill="none" stroke="#fff" stroke-width="2"/></svg>
            <span class="lang">ENG</span>
            <span class="clock"><time>20:09</time><time>06/11/2019</time></span>
            <span class="notify"><svg width="40" height="38" viewBox="0 0 40 38"><path d="M0 0h40v34H24l-6 4-4-4H0z" fill="#fff"/><path d="M7 9h26M7 17h26M7 25h18" stroke="#1c2742" stroke-width="2"/></svg><b>3</b></span>
        </div>
    </footer>

    <form class="dialog" aria-label="Import infographics5.ai to Stage">
        <div class="dialog-title"><span>Import infographics5.ai to Stage</span><button type="button" class="plain" aria-label="Close"><svg width="20" height="20"><use href="#close"/></svg></button></div>
        <div class="dialog-body">
            <div class="field">
                <label for="artboard">Select Illustrator Artboard:</label>
                <div class="select"><select id="artboard"><option>1 - "Artboard 1"</option></select><svg width="20" height="12"><use href="#chevron"/></svg></div>
            </div>
            <div class="columns">
                <div class="layers">
                    <div class="layers-head">
                        <label class="check"><input type="checkbox" checked>Select all layers</label>
                        <svg width="24" height="30" viewBox="0 0 24 30"><path d="M12 0l11 14H1zM12 16l11 14H1z" fill="#c6c6c6"/></svg>
                        <svg width="24" height="30" viewBox="0 0 24 30"><path d="M1 0h22L12 14zM1 16h22L12 30z" fill="#c6c6c6"/></svg>
                    </div>
                    <div class="tree">
                        <div class="tree-rows">
                            <div class="row"><svg width="20" height="12"><use href="#chevron"/></svg><label><input type="checkbox" checked><svg class="thumb" viewBox="0 0 38 38"><path d="M6 2h23v34H6z" fill="#8cff26"/><path d="M6 1h23v3H6zM6 2h2v34H6zM11 26h4v3h-4zM11 31h4v3h-4z" fill="#000"/><path d="M10 10h5v5h-5z" fill="#ffa63f"/><path d="M14 19h8l-4 5z" fill="#e8205a"/></svg>Layer 1</label></div>
                            <div class="row l1"><svg width="20" height="12"><use href="#chevron"/></svg><label><input type="checkbox" checked><svg class="thumb" viewBox="0 0 38 38"><path d="M15 18h5l2 1-3 4z" fill="#e8205a"/><path d="M20 18h3v3h-3zM11 26h4v3h-4zM11 31h4v3h-4z" fill="#000"/></svg>&lt;Clip Group&gt;</label></div>
                            <div class="row l2"><label><input type="checkbox" checked><svg class="thumb" viewBox="0 0 38 38"></svg>&lt;Clipping Path&gt;</label></div>
                            <div class="row l2"><label><input type="checkbox" checked><svg class="thumb" viewBox="0 0 38 38"><circle cx="19" cy="19" r="17" fill="none" stroke="#000" stroke-width="2" stroke-dasharray="7 3"/></svg>&lt;Compound Path&gt;</label></div>
                            <div class="row l2"><label><input type="checkbox" checked><svg class="thumb" viewBox="0 0 38 38"><circle cx="19" cy="19" r="18" fill="#78f8ff"/></svg>&lt;Path&gt;</label></div>
                            <div class="row l2"><label><input type="checkbox" checked><svg class="thumb" viewBox="0 0 38 38"><circle cx="19" cy="19" r="18" fill="none" stroke="#000" stroke-width="2" stroke-dasharray="5 5"/></svg>&lt;Compound Path&gt;_1</label></div>
                            <div class="row l2"><label><input type="checkbox" checked><svg class="thumb" viewBox="0 0 38 38"><circle cx="19" cy="19" r="19" fill="#ff0f5f"/></svg>&lt;Path&gt;_1</label></div>
                            <div class="row l1 leaf"><label><input type="checkbox" checked><svg class="thumb" viewBox="0 0 38 38"></svg>&lt;Compound Path&gt;</label></div>
                            <div class="row l1 leaf"><label><input type="checkbox" checked><svg class="thumb" viewBox="0 0 38 38"><path d="M1 4h37v30H1z" fill="#ffa63f"/></svg>&lt;Path&gt;</label></div>
                            <div class="row l1 leaf"><label><input type="checkbox" checked><svg class="thumb" viewBox="0 0 38 38"></svg>&lt;Compound Path&gt;_1</label></div>
                            <div class="row l1 leaf"><label><input type="checkbox" checked><svg class="thumb" viewBox="0 0 38 38"><path d="M7 1h23v36H7z" fill="#8cff26"/></svg>&lt;Path&gt;_1</label></div>
                        </div>
                        <div class="hscroll"><svg width="10" height="18"><use href="#left"/></svg><i></i><svg width="10" height="18"><use href="#right"/></svg></div>
                    </div>
                </div>
                <div class="import-options">
                    <h2>Import Options:</h2>
                    <p>To set import options, select<br>one or more items on the left.</p>
                </div>
            </div>
            <div class="field convert">
                <label for="convert">Convert layers to:</label>
                <div class="select"><select id="convert"><option>Animate layers</option></select><svg width="20" height="12"><use href="#chevron"/></svg></div>
            </div>
            <div class="checks">
                <label class="check"><input type="checkbox" checked>Place objects at original position</label>
                <label class="check"><input type="checkbox">Import as a single bitmap image</label>
                <label class="check"><input type="checkbox">Import unused symbols</label>
                <label class="check"><input type="checkbox">Set stage size to the same as Illustrator artboard(600 x 850)</label>
            </div>
            <div class="actions">
                <button type="button" class="btn-flat">Hide Advanced Options</button>
                <button type="button" class="btn-round">Cancel</button>
                <button type="submit" class="btn-round primary">Import</button>
            </div>
        </div>
    </form>
</body>
</html>
```
FILE: styles.css
```
* {
    box-sizing: border-box;
}
body {
    margin: 0;
    height: 100vh;
    display: flex;
    flex-direction: column;
    background: #383838;
    color: #c6c6c6;
    font-family: "DejaVu Sans Condensed", "DejaVu Sans", "Noto Sans", sans-serif;
    font-size: 26px;
    line-height: 32px;
    overflow: hidden;
}
button, input, select {
    font: inherit;
    color: inherit;
    margin: 0;
    padding: 0;
    border: none;
    background: none;
}
svg {
    display: block;
    flex: none;
}
i {
    display: block;
}
.defs {
    position: absolute;
}
.dim {
    color: #757575;
}
.push {
    margin-left: auto;
}

/* menu bar */
.menubar {
    display: flex;
    height: 75px;
    background: #535353;
    font-family: "Noto Sans", sans-serif;
    font-size: 28px;
    color: #f0f0f0;
}
.app-logo {
    width: 105px;
    padding: 12px 0 0 16px;
    font-family: "Open Sans", sans-serif;
    font-size: 38px;
    line-height: 42px;
    color: #a8503c;
}
.menu {
    display: flex;
    gap: 44px;
    height: 50px;
    margin-top: 12px;
    padding: 9px 34px 0 0;
    border-right: 2px solid #3c3c3c;
}
.menu a {
    color: inherit;
    text-decoration: none;
}
.workspace-switch {
    display: flex;
    align-items: center;
    gap: 26px;
    height: 50px;
    margin: 12px 34px 0 auto;
    padding: 0 0 4px 30px;
    border-left: 2px solid #3c3c3c;
    color: #dcdcdc;
    font-size: 27px;
}
.window-controls {
    display: flex;
    height: 47px;
    margin-right: 8px;
    border: 2px solid #636363;
    border-top: none;
    border-radius: 0 0 8px 8px;
    color: #b0b0b0;
}
.window-controls button {
    display: grid;
    place-items: center;
    width: 69px;
}
.window-controls button + button {
    border-left: 2px solid #636363;
}
.window-controls button:last-child {
    width: 115px;
}

/* workspace columns */
.workspace {
    flex: 1;
    min-height: 0;
    display: flex;
    padding-top: 3px;
    gap: 5px;
}
.editor {
    flex: 1;
    min-width: 0;
    display: flex;
    flex-direction: column;
    padding-left: 3px;
}
.doc-tabs {
    height: 49px;
    background: #424242;
    border-bottom: 2px solid #383838;
}
.doc-tab {
    display: inline-flex;
    align-items: center;
    gap: 22px;
    height: 47px;
    padding: 2px 26px 0 24px;
    background: #535353;
    color: #f0f0f0;
    font-weight: bold;
    font-size: 25px;
}
.doc-tab svg {
    color: #a8a8a8;
}
.scene-bar {
    display: flex;
    align-items: center;
    height: 68px;
    padding: 4px 22px 0 15px;
    background: #585858;
    border-bottom: 2px solid #4b4b4b;
    color: #fff;
}
.scene-bar svg + svg {
    margin: 0 27px 0 36px;
}
.zoom-box {
    display: grid;
    place-items: center;
    width: 44px;
    height: 46px;
    margin-left: auto;
    border: 2px solid #646464;
    border-radius: 0 6px 6px 0;
    background: #4b4b4b;
}
.stage-wrap {
    flex: 1;
    min-height: 0;
    display: flex;
}
.canvas {
    flex: 1;
    padding: 180px 0 0 704px;
    background: #282828;
}
.stage {
    width: 1350px;
    height: 1000px;
    background: #fff;
    border: 2px solid #000;
}
.vscroll {
    display: flex;
    flex-direction: column;
    align-items: center;
    justify-content: space-between;
    width: 32px;
    padding: 8px 0;
    background: #4b4b4b;
    color: #a0a0a0;
}
.vscroll i {
    width: 26px;
    height: 370px;
    margin-bottom: 10px;
    border-radius: 12px;
    background: #606060;
}
.hscroll {
    display: flex;
    align-items: center;
    background: #4b4b4b;
    color: #a0a0a0;
}
.hscroll i {
    height: 26px;
    border-radius: 12px;
    background: #606060;
}
.canvas-scroll {
    height: 30px;
    padding: 0 36px 0 8px;
    justify-content: space-between;
}
.canvas-scroll i {
    width: 1508px;
}

/* panel tabs */
.tabs {
    display: flex;
    flex: none;
    height: 43px;
    background: #424242;
    border-bottom: 2px solid #383838;
    font-weight: bold;
    font-size: 23px;
}
.tab {
    height: 43px;
    padding: 0 17px 0 19px;
    border-right: 2px solid #383838;
    color: #a0a0a0;
    font-weight: bold;
}
.tab.active {
    background: #535353;
    color: #f0f0f0;
}
.menu-icon {
    margin: 12px 14px 0 auto;
    color: #b0b0b0;
}

/* timeline */
.timeline {
    flex: none;
    height: 497px;
    margin-top: 6px;
    display: flex;
    flex-direction: column;
}
.tl-grid {
    flex: 1;
    display: flex;
}
.tl-layers {
    width: 565px;
    border-right: 2px solid #000;
    display: flex;
    flex-direction: column;
    background: #535353;
}
.tl-tools, .tl-playback {
    height: 84px;
    display: flex;
    align-items: center;
}
.tl-tools {
    padding: 2px 34px 0 30px;
    gap: 30px;
}
.tl-tools .dim, .tl-tools .dim + svg {
    margin-left: 6px;
}
.tl-heads {
    display: flex;
    justify-content: flex-end;
    align-items: flex-end;
    height: 86px;
    padding: 0 11px 14px 0;
    border-bottom: 2px solid #404040;
}
.tl-heads svg {
    margin-left: 22px;
}
.tl-heads svg:nth-child(2) {
    margin: 0 0 4px 26px;
}
.tl-layer {
    display: flex;
    align-items: center;
    height: 44px;
    padding: 0 19px 0 63px;
    background: #3d6a9e;
    color: #fff;
}
.tl-layer span {
    margin-left: 15px;
}
.outline-color {
    width: 14px;
    height: 28px;
    margin-left: auto;
    background: #0ff;
}
.dot {
    width: 9px;
    height: 9px;
    margin-left: 40px;
    border-radius: 4px;
    background: #fff;
}
.tl-rest {
    flex: 1;
    background: #4b4b4b;
    border-top: 2px solid #5f5f5f;
}
.tl-foot {
    height: 34px;
    border-top: 2px solid #585858;
}
.tl-frames {
    position: relative;
    flex: 1;
    display: flex;
    flex-direction: column;
    background: #535353;
}
.tl-playback {
    border-bottom: 2px solid #424242;
}
.num {
    font-family: "Noto Sans", sans-serif;
    font-size: 22px;
}
.num u {
    color: #fff;
    text-decoration: none;
    border-bottom: 2px dotted #c6c6c6;
}
.n1 {
    width: 82px;
    padding-left: 15px;
}
.n2 {
    width: 126px;
    padding-left: 15px;
}
.n3 {
    width: 125px;
}
.group {
    display: flex;
    align-items: center;
    height: 100%;
    border-left: 2px solid #4d4d4d;
}
.g1 {
    gap: 27px;
    padding: 0 28px 0 34px;
}
.g2 {
    gap: 14px;
    padding-left: 30px;
}
.tl-zoom {
    display: flex;
    align-items: center;
    gap: 22px;
    margin-left: auto;
    padding-right: 36px;
}
.tl-zoom i {
    width: 60px;
    height: 5px;
    background: #757575;
}
.tl-ruler {
    display: flex;
    flex-direction: column;
    height: 86px;
    padding-right: 36px;
    border-bottom: 2px solid #404040;
    color: #e0e0e0;
    font-family: "Noto Sans", sans-serif;
    font-size: 25px;
}
.second {
    height: 45px;
    padding: 7px 0 0 463px;
}
.numbers {
    display: flex;
    height: 30px;
}
.numbers span {
    width: 100px;
}
.numbers .first {
    width: 80px;
    padding-left: 2px;
}
.numbers .last {
    width: 112px;
    margin-left: auto;
}
.ticks {
    height: 9px;
    background: repeating-linear-gradient(90deg, #858585 0 2px, transparent 2px 20px);
}
.tl-strip {
    height: 46px;
    margin-right: 36px;
    border-top: 2px solid #5f5f5f;
    background: repeating-linear-gradient(90deg, transparent 0 17px, #5f5f5f 17px 20px), repeating-linear-gradient(90deg, #505050 0 80px, #474747 80px 100px);
}
.key {
    width: 21px;
    height: 43px;
    padding: 21px 0 0 3px;
    border: solid #2b2b2b;
    border-width: 0 2px 2px 0;
    background: #4b4b4b;
}
.key::after {
    content: "";
    display: block;
    width: 12px;
    height: 12px;
    border: 2px solid #000;
    border-radius: 5px;
}
.tl-frames .tl-foot {
    padding-top: 2px;
    background: #4b4b4b;
}
.tl-foot i {
    width: 390px;
    height: 26px;
    margin-left: 3px;
    border-radius: 12px;
    background: #606060;
}
.playhead {
    position: absolute;
    left: -3px;
    top: 88px;
    width: 23px;
    height: 78px;
    border: 3px solid #a50505;
    background: rgba(165, 5, 5, 0.35);
}
.playhead::after {
    content: "";
    position: absolute;
    left: 8px;
    top: 74px;
    width: 2px;
    height: 252px;
    background: #a50505;
}

/* collapsed icon dock */
.dock, .panels, .tools {
    display: flex;
    flex-direction: column;
}
.dock {
    width: 96px;
    border-left: 1px solid #222;
}
.dock-head {
    display: flex;
    flex: none;
    align-items: center;
    justify-content: flex-end;
    height: 27px;
    margin-bottom: 3px;
    padding-right: 14px;
    background: #424242;
}
.dock-group {
    display: flex;
    flex-direction: column;
    align-items: center;
    gap: 28px;
    padding-bottom: 21px;
    margin-bottom: 2px;
    background: #535353;
}
.dock-group.colors {
    gap: 39px;
    padding-bottom: 26px;
}
.grip {
    width: 48px;
    height: 10px;
    margin: 8px 0 -10px;
    background: repeating-linear-gradient(90deg, #424242 0 2px, transparent 2px 5px);
}
.colors .grip {
    margin: 8px 0 -16px;
}
.dock-rest {
    flex: 1;
    background: #535353;
}

/* library + snippets */
.panels {
    width: 750px;
}
.library {
    display: flex;
    flex-direction: column;
    height: 1248px;
    background: #535353;
}
.lib-source {
    display: flex;
    align-items: center;
    gap: 22px;
    height: 70px;
    padding: 5px 24px 0 12px;
    border-bottom: 2px solid #4b4b4b;
}
.select {
    display: grid;
    align-items: center;
    height: 50px;
    color: #fff;
}
.select select {
    grid-area: 1 / 1;
    width: 100%;
    height: 100%;
    padding: 4px 0 0 16px;
    border: 2px solid #646464;
    border-radius: 6px;
    background: #4b4b4b;
    font-size: 26px;
    appearance: none;
}
.select svg {
    grid-area: 1 / 1;
    justify-self: end;
    margin-right: 12px;
    pointer-events: none;
}
.lib-source .select {
    flex: 1;
    height: 45px;
}
.lib-preview {
    height: 348px;
    border-bottom: 14px solid #4b4b4b;
}
.lib-search {
    display: flex;
    justify-content: space-between;
    align-items: center;
    height: 56px;
    padding: 0 8px;
    font-size: 22px;
}
.lib-search label {
    padding-top: 6px;
}
.search-field {
    display: flex;
    align-items: center;
    width: 328px;
    height: 48px;
    padding-left: 12px;
    border: 2px solid #646464;
    border-radius: 6px;
    background: #454545;
}
.search-field input {
    flex: 1;
    min-width: 0;
}
.lib-list {
    flex: 1;
    margin: 0 2px;
    border: 2px solid #646464;
    border-bottom: none;
    border-radius: 6px 6px 0 0;
}
.lib-name {
    display: flex;
    align-items: center;
    gap: 14px;
    height: 48px;
    padding: 2px 0 0 10px;
    border-bottom: 2px solid #757575;
}
.lib-name svg {
    margin-bottom: 6px;
}
.lib-foot {
    height: 30px;
    padding: 0 14px 0 8px;
    gap: 16px;
}
.lib-foot svg:nth-child(-n+4) {
    color: #c6c6c6;
}
.lib-foot i {
    width: 265px;
}
.snippets {
    flex: 1;
    display: flex;
    flex-direction: column;
    margin-top: 4px;
    border-top: 1px solid #222;
}
.snip-bar {
    display: flex;
    gap: 12px;
    height: 77px;
    padding: 9px 6px 10px;
    background: #e3e3e3;
    border-bottom: 2px solid #b5b5b5;
}
.snip-bar button {
    display: grid;
    place-items: center;
    width: 60px;
    border: 1px solid #c6c6c6;
    border-top: 3px solid #bababa;
    border-bottom: 3px solid #bababa;
}
.snip-bar .gear {
    grid-template-columns: 1fr 32px;
    width: 90px;
    margin-left: auto;
    border: 2px solid #757575;
    border-radius: 8px;
    background: linear-gradient(#fff, #d5d5d5);
}
.gear span {
    display: grid;
    place-items: center;
    align-self: stretch;
    border-left: 2px solid #757575;
    width: 32px;
}
.snip-list {
    flex: 1;
    margin: 0;
    padding: 4px 16px;
    list-style: none;
    background: #fff;
    border: 2px solid #c6c6c6;
    border-top: none;
    color: #333;
}
.snip-list li {
    display: flex;
    align-items: center;
    gap: 8px;
    height: 53px;
}

/* tools */
.tools {
    width: 184px;
    margin-right: 1px;
    background: #535353;
}
.tools .tabs {
    margin-bottom: 6px;
}
.tool-grid {
    display: grid;
    grid-template-columns: 1fr 1fr;
    justify-items: center;
    padding: 0 7px 0 5px;
}
.tool {
    display: grid;
    place-items: center;
    width: 75px;
    height: 60px;
    margin: 5px 0;
    border-radius: 6px;
}
.tool svg {
    grid-area: 1 / 1;
    width: 48px;
    height: 48px;
}
.tool.on {
    background: #2e2e2e;
}
.tool.more::after {
    content: "";
    grid-area: 1 / 1;
    place-self: end;
    width: 9px;
    height: 8px;
    margin: 0 2px 3px 0;
    background: #e0e0e0;
    clip-path: polygon(100% 0, 100% 100%, 0 100%);
}
.tool.dim::after {
    background: #858585;
}
.tools hr {
    width: 166px;
    height: 2px;
    margin: 4px 0 5px 6px;
    border: none;
    background: #4b4b4b;
}
.tools hr.short {
    width: 92px;
    margin: 11px 0 14px 44px;
}
.swatches {
    display: grid;
    grid-template-columns: 50px 50px;
    justify-items: center;
    align-items: center;
    gap: 21px 8px;
    padding-left: 38px;
}
.swatch-icon, .end {
    justify-self: end;
}
.swatch-icon {
    margin-right: 9px;
}
.end {
    margin-right: 3px;
}
.end + svg {
    justify-self: start;
}
.swatch {
    width: 50px;
    height: 49px;
    border: 2px solid #222;
}
.blue {
    background: #0090d6;
}
.white {
    background: #fff;
}
.fill-mode {
    display: grid;
    place-items: center;
    width: 50px;
    height: 45px;
    border-radius: 6px;
    background: #2e2e2e;
}

/* taskbar */
.taskbar {
    display: flex;
    flex: none;
    height: 100px;
    background: linear-gradient(90deg, #223840, #22343f 60%, #1b2744 80%);
    color: #fff;
    font-family: "Noto Sans", sans-serif;
    font-size: 28px;
}
.taskbar button {
    display: grid;
    place-items: center;
}
.start {
    width: 120px;
}
.task-search {
    display: flex;
    align-items: center;
    gap: 32px;
    width: 860px;
    padding-left: 30px;
    background: #f2f2f2;
    border: 1px solid #c4c4c4;
    border-width: 3px 1px;
}
.task-search input {
    flex: 1;
    padding-top: 4px;
    font-size: 36px;
    line-height: 48px;
}
.task-search input::placeholder {
    color: #333;
    opacity: 1;
}
.task-icons {
    display: flex;
    margin-right: 7px;
}
.task-icons button {
    width: 120px;
}
.task-apps {
    display: flex;
    gap: 3px;
}
.task-apps button {
    width: 121px;
    padding-top: 4px;
    border-bottom: 4px solid transparent;
    background: linear-gradient(#7bb8ea, #7bb8ea) 50% 100% / 100px 4px no-repeat border-box;
}
.task-apps .current {
    border-bottom-color: #7bb8ea;
    background: #4e5f66;
}
.adobe span {
    display: grid;
    place-items: center;
    width: 58px;
    height: 56px;
    border: 3px solid #c8731f;
    background: #241303;
    color: #ff8800;
    font-family: "Open Sans", sans-serif;
    font-weight: 600;
    font-size: 31px;
}
.acrobat span, .an span {
    border-color: #b81f1c;
    background: #2a0504;
}
.an span {
    border-color: #d8402a;
    color: #ff4a2b;
}
.tray {
    display: flex;
    align-items: center;
    gap: 44px;
    margin-left: auto;
    margin-right: 11px;
    padding-right: 32px;
    border-right: 2px solid #858c9c;
}
.clock {
    display: grid;
    gap: 15px;
    margin-left: -8px;
    padding-top: 3px;
    text-align: center;
}
.notify {
    position: relative;
    width: 58px;
}
.notify b {
    position: absolute;
    left: 17px;
    top: 17px;
    width: 42px;
    height: 42px;
    border: 2px solid #858c9c;
    border-radius: 50%;
    background: #2c2f36;
    font-size: 26px;
    line-height: 36px;
    text-align: center;
}

/* import dialog, floats over the workspace */
.dialog {
    position: absolute;
    left: 1183px;
    top: 134px;
    width: 1473px;
    border: 1px solid #2e2e2e;
    background: #535353;
    color: #fff;
    font-size: 27px;
}
.dialog-title {
    display: flex;
    align-items: center;
    justify-content: space-between;
    height: 69px;
    padding: 0 31px 0 16px;
    background: #fff;
    color: #111;
    font-family: "Noto Sans", sans-serif;
    font-size: 28px;
}
.dialog-body {
    padding: 65px 49px 74px 51px;
}
.field {
    display: flex;
    align-items: center;
    color: #c6c6c6;
}
.field label {
    width: 355px;
    padding: 10px 0 0 2px;
}
.field .select {
    width: 423px;
}
.convert {
    margin-top: 51px;
}
.convert label {
    width: 240px;
}
.columns {
    display: flex;
    gap: 53px;
    margin-top: 74px;
}
.layers {
    width: 673px;
}
.layers-head {
    display: flex;
    align-items: flex-end;
    gap: 22px;
    height: 60px;
    padding: 0 10px 14px 2px;
}
.check {
    display: flex;
    align-items: center;
    gap: 14px;
    height: 30px;
}
.layers-head .check {
    margin: 0 auto 14px 0;
}
input[type="checkbox"] {
    display: grid;
    place-items: center;
    flex: none;
    width: 30px;
    height: 30px;
    margin-bottom: 4px;
    border: 2px solid #c6c6c6;
    border-radius: 4px;
    appearance: none;
}
input[type="checkbox"]:checked {
    background: #c6c6c6;
}
input[type="checkbox"]:checked::after {
    content: "";
    width: 9px;
    height: 17px;
    margin-bottom: 5px;
    border: solid #454545;
    border-width: 0 4px 4px 0;
    transform: rotate(40deg);
}
.tree {
    display: flex;
    flex-direction: column;
    justify-content: space-between;
    height: 875px;
    border: 2px solid #646464;
    border-radius: 4px;
}
.tree-rows {
    display: grid;
    grid-auto-rows: 1fr;
    height: 524px;
    margin-top: 6px;
    color: #e3e3e3;
}
.row {
    display: flex;
    align-items: center;
    gap: 22px;
    padding-left: 16px;
}
.row label {
    display: flex;
    align-items: center;
}
.row.l1 {
    padding-left: 74px;
}
.row.l1.leaf {
    padding-left: 116px;
}
.row.l2 {
    padding-left: 174px;
}
.row > svg {
    margin-bottom: 4px;
}
.thumb {
    width: 42px;
    height: 42px;
    margin: 0 34px 4px 22px;
    background: #fff;
    border: 2px solid #111;
}
.tree .hscroll {
    height: 30px;
    padding: 0 10px 0 6px;
    gap: 14px;
}
.tree .hscroll i {
    flex: 1;
}
.import-options {
    width: 550px;
    color: #787878;
}
.import-options h2 {
    margin: 19px 0 257px;
    font: inherit;
}
.import-options p {
    margin: 0;
    line-height: 33px;
    text-align: center;
}
.checks {
    display: grid;
    gap: 34px;
    margin: 70px 0 52px 2px;
}
.actions {
    display: flex;
    align-items: flex-end;
    gap: 26px;
    font-size: 26px;
}
.btn-flat {
    width: 396px;
    height: 47px;
    margin-right: auto;
    padding-top: 4px;
    border: 2px solid #808080;
    border-radius: 4px;
}
.btn-round {
    width: 230px;
    height: 66px;
    padding-top: 2px;
    border: 2px solid #fff;
    border-radius: 33px;
}
.btn-round.primary {
    border-width: 4px;
}
```
